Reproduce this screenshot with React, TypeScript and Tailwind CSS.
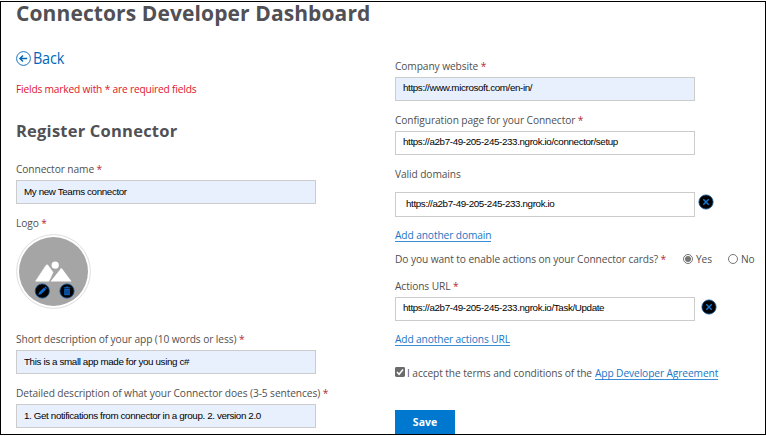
import type { ReactNode } from "react";

function Label({ children, required, className = "" }: { children: ReactNode; required?: boolean; className?: string }) {
  return (
    <div className={`h-4 shrink-0 leading-4 text-[10.2px] tracking-[-0.09px] whitespace-nowrap text-[#505050] ${className}`}>
      {children}
      {required && <span className="text-[#b52a35]"> *</span>}
    </div>
  );
}

function Field({ value, filled, className = "h-6 pt-[2px] pl-[7px]" }: { value: string; filled?: boolean; className?: string }) {
  return (
    <div
      className={`w-[300px] shrink-0 border border-[#cccccc] font-['Liberation_Sans',Arial,sans-serif] text-[9.8px] leading-[18px] tracking-[-0.37px] whitespace-nowrap text-black ${filled ? "bg-[#e8f0fe]" : "bg-white"} ${className}`}
    >
      {value}
    </div>
  );
}

function RemoveButton({ className }: { className: string }) {
  return (
    <svg className={className} width="16" height="16" viewBox="0 0 16 16" fill="none">
      <circle cx="8" cy="8" r="7.1" fill="#000" stroke="#0b559c" strokeWidth="0.8" />
      <path d="M5.3 5.3l5.4 5.4M10.7 5.3l-5.4 5.4" stroke="#1477d4" strokeWidth="1.5" />
    </svg>
  );
}

function Logo() {
  return (
    <svg className="mt-[3px] block" width="75" height="75" viewBox="0 0 75 75">
      <circle cx="37.5" cy="37.5" r="36.9" fill="#fff" stroke="#dedede" />
      <circle cx="37.5" cy="37.5" r="34.5" fill="#a5a5a5" />
      <circle cx="39.2" cy="31.2" r="3.6" fill="#fff" />
      <path d="M19.6 47.2L30 31.4q1-1.2 2.1 0L37 38.3L33 47.2z" fill="#fff" stroke="#fff" strokeWidth="0.6" strokeLinejoin="round" />
      <path d="M34 47.6L43.9 35q1.2-1.4 2.4 0L55.6 47.6z" fill="#fff" />
      <path d="M33.4 47.8L44 34.6" stroke="#a5a5a5" strokeWidth="1.2" />
      <g transform="translate(26.3 57)">
        <circle r="7.1" fill="#000" stroke="#0b559c" strokeWidth="0.8" />
        <path d="M-4 4l.8-2.8L1.7-3.4l2 2L-1.2 3.2zM2.2-3.8l.7-.6q1 .1 1.7 1.7l-.5.6z" fill="#0b6bce" />
      </g>
      <g transform="translate(51 57)">
        <circle r="7.1" fill="#000" stroke="#0b559c" strokeWidth="0.8" />
        <path d="M-3.2-3.7h2v-.8h2.4v.8h2v.9h-6.4zM-2.8-2.2h5.6V4.2h-5.6z" fill="#0b5fb8" />
        <path d="M-1-1.2v4.4M1-1.2v4.4" stroke="#03264d" strokeWidth="0.6" />
      </g>
    </svg>
  );
}

function Radio({ checked }: { checked?: boolean }) {
  return (
    <span className="flex size-[10px] shrink-0 items-center justify-center rounded-full border border-[#767676]">
      {checked && <span className="size-[6px] rounded-full bg-[#767676]" />}
    </span>
  );
}

export default function App() {
  return (
    <div className="h-[436px] w-[766px] bg-white pt-px font-['Open_Sans','Noto_Sans',sans-serif]">
      <main className="flex h-[434px] w-[766px] border border-black">
        <section className="w-[379px] shrink-0 pl-[15px]">
          <h1 className="h-6 text-[21px] leading-[22px] font-bold tracking-[0.1px] whitespace-nowrap text-[#505055]">
            Connectors Developer Dashboard
          </h1>
          <div className="mt-[22px] flex h-5 items-center text-[#0067b8]">
            <svg width="15" height="15" viewBox="0 0 15 15" fill="none" stroke="currentColor">
              <circle cx="7.5" cy="7.5" r="6.9" strokeWidth="0.9" />
              <path d="M11.2 7.5H4.4M7 4.5L4 7.5l3 3" strokeWidth="1.5" />
            </svg>
            <span className="ml-[2px] origin-left scale-x-90 text-[16px] leading-5 tracking-[-0.2px]">Back</span>
          </div>
          <div className="mt-[13px] h-4 text-[10.2px] leading-4 tracking-[-0.18px] whitespace-nowrap text-[#e0142a]">
            Fields marked with * are required fields
          </div>
          <h2 className="mt-[22px] h-6 text-[16.5px] leading-6 font-bold tracking-[0.22px] whitespace-nowrap text-[#505055]">
            Register Connector
          </h2>
          <Label required className="mt-[18px]">Connector name</Label>
          <div className="mt-[3px]"><Field filled value="My new Teams connector" /></div>
          <Label required className="mt-[11px]">Logo</Label>
          <Logo />
          <Label required className="mt-[22px]">Short description of your app (10 words or less)</Label>
          <div className="mt-[3px]"><Field filled value="This is a small app made for you using c#" /></div>
          <Label required className="mt-[11px]">Detailed description of what your Connector does (3-5 sentences)</Label>
          <div className="mt-[3px]"><Field filled value="1. Get notifications from connector in a group. 2. version 2.0" /></div>
        </section>
        <section className="w-[370px] shrink-0 pt-14 pl-[15px]">
          <Label required>Company website</Label>
          <div className="mt-[3px]"><Field filled className="h-6 pt-px pl-[7px]" value="https://www.microsoft.com/en-in/" /></div>
          <Label required className="mt-[11px]">Configuration page for your Connector</Label>
          <div className="mt-[3px]"><Field className="h-6 pt-px pl-[7px]" value="https://a2b7-49-205-245-233.ngrok.io/connector/setup" /></div>
          <Label className="mt-[11px]">Valid domains</Label>
          <div className="mt-[10px] flex">
            <Field className="h-[25px] pt-[2px] pl-[10px]" value="https://a2b7-49-205-245-233.ngrok.io" />
            <RemoveButton className="mt-[2px] ml-[3px]" />
          </div>
          <div className="mt-[10px] flex h-[15px] text-[10.2px] leading-4 tracking-[-0.1px] whitespace-nowrap">
            <a className="border-b border-[#3a8ed6] text-[#1a75c4]">Add another domain</a>
          </div>
          <div className="mt-[9px] flex h-4 items-center">
            <Label required className="w-[288px]">Do you want to enable actions on your Connector cards?</Label>
            <Radio checked />
            <Label className="ml-[3px] w-[32px]">Yes</Label>
            <Radio />
            <Label className="ml-[3px]">No</Label>
          </div>
          <Label required className="mt-[11px]">Actions URL</Label>
          <div className="mt-[3px] flex">
            <Field className="h-6 pt-px pl-[7px]" value="https://a2b7-49-205-245-233.ngrok.io/Task/Update" />
            <RemoveButton className="mt-[2px] ml-[6px]" />
          </div>
          <div className="mt-[10px] flex h-[15px] text-[10.2px] leading-4 tracking-[-0.12px] whitespace-nowrap">
            <a className="border-b border-[#3a8ed6] text-[#1a75c4]">Add another actions URL</a>
          </div>
          <div className="mt-[19px] flex h-4 text-[10.2px] leading-4 tracking-[-0.1px] whitespace-nowrap">
            <svg className="mt-[2px] mr-[2px]" width="10" height="10" viewBox="0 0 10 10">
              <rect width="10" height="10" rx="1.4" fill="#6b6b6b" />
              <path d="M2 5.1l2.1 2.2L8 2.6" fill="none" stroke="#fff" strokeWidth="1.5" />
            </svg>
            <Label className="mr-[3px]">I accept the terms and conditions of the</Label>
            <a className="h-[15px] border-b border-[#3a8ed6] text-[#1a75c4]">App Developer Agreement</a>
          </div>
          <button className="mt-[29px] block h-6 w-[60px] bg-[#0078d0] text-center text-[10.5px] leading-6 font-bold text-white">Save</button>
        </section>
      </main>
    </div>
  );
}
